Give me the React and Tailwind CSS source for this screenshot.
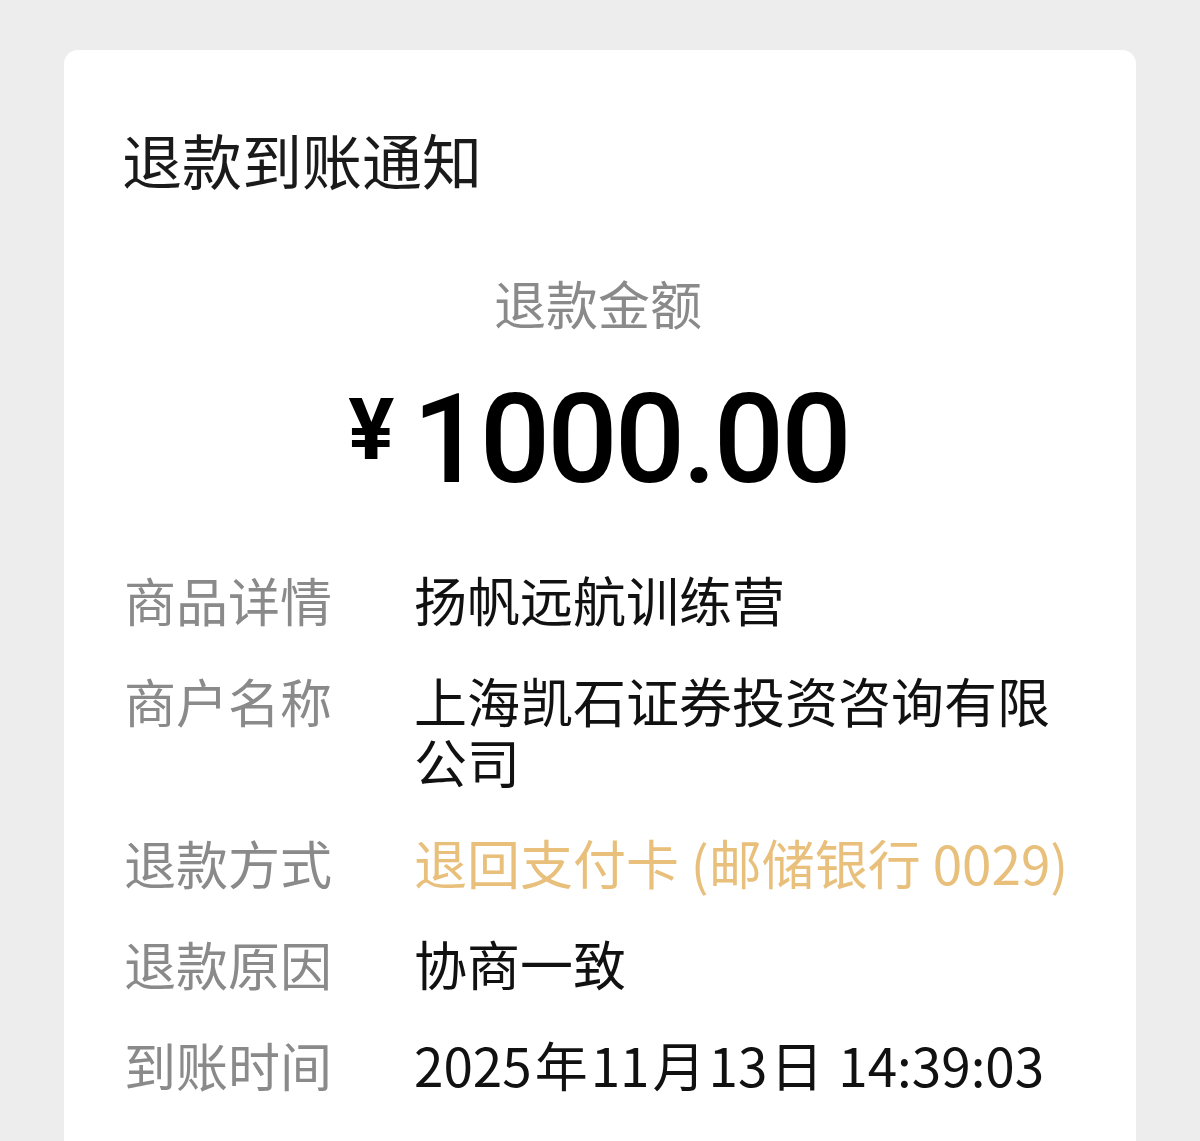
export default function App() {
  const cjk = "font-['Noto_Sans_CJK_SC','Noto_Sans',sans-serif]";
  const timeValue = (
    <>
      2025<span className="px-[3px]">年</span>11<span className="px-[3px]">月</span>13<span className="px-[3px]">日</span> 14:39:03
    </>
  );
  const rows = [
    { label: "商品详情", value: "扬帆远航训练营" },
    { label: "商户名称", value: "上海凯石证券投资咨询有限公司" },
    { label: "退款方式", value: "退回支付卡 (邮储银行 0029)", gold: true },
    { label: "退款原因", value: "协商一致" },
    { label: "到账时间", value: timeValue, time: true },
  ];
  return (
    <div className={`min-h-[1141px] bg-[#ededed] pt-[50px] px-[64px] overflow-hidden ${cjk}`}>
      <div className="bg-white rounded-t-[14px] min-h-[1120px] pl-[60px] pr-[56px] pt-[79px]">
        <div className="text-[60px] leading-[60px] text-[#1a1a1a] -ml-[2px]">退款到账通知</div>
        <div className="mt-[84px] text-center text-[52px] leading-[60px] text-[#8a8a8a] -ml-[8px]">退款金额</div>
        <div className="mt-[42px] flex justify-center items-start -ml-[7px]">
          <span className="font-['Roboto',sans-serif] font-bold text-[86px] leading-[86px] mt-[12px] mr-[18px] text-black">¥</span>
          <span className="font-['Roboto',sans-serif] font-medium text-[124px] leading-[130px] tracking-[-3px] text-black">1000.00</span>
        </div>
        <div className="mt-[64px] flex flex-col gap-[40px]">
          {rows.map((r) => (
            <div key={r.label} className="flex items-start">
              <div className="w-[290px] shrink-0 text-[52px] leading-[61px] text-[#8a8a8a]">{r.label}</div>
              <div
                className={
                  "flex-1 text-[53px] leading-[61px] " +
                  (r.gold ? "text-[#e8c07c] whitespace-nowrap " : "text-[#111111] ") +
                  (r.time ? "whitespace-nowrap" : "")
                }
              >
                {r.value}
              </div>
            </div>
          ))}
        </div>
      </div>
    </div>
  );
}
